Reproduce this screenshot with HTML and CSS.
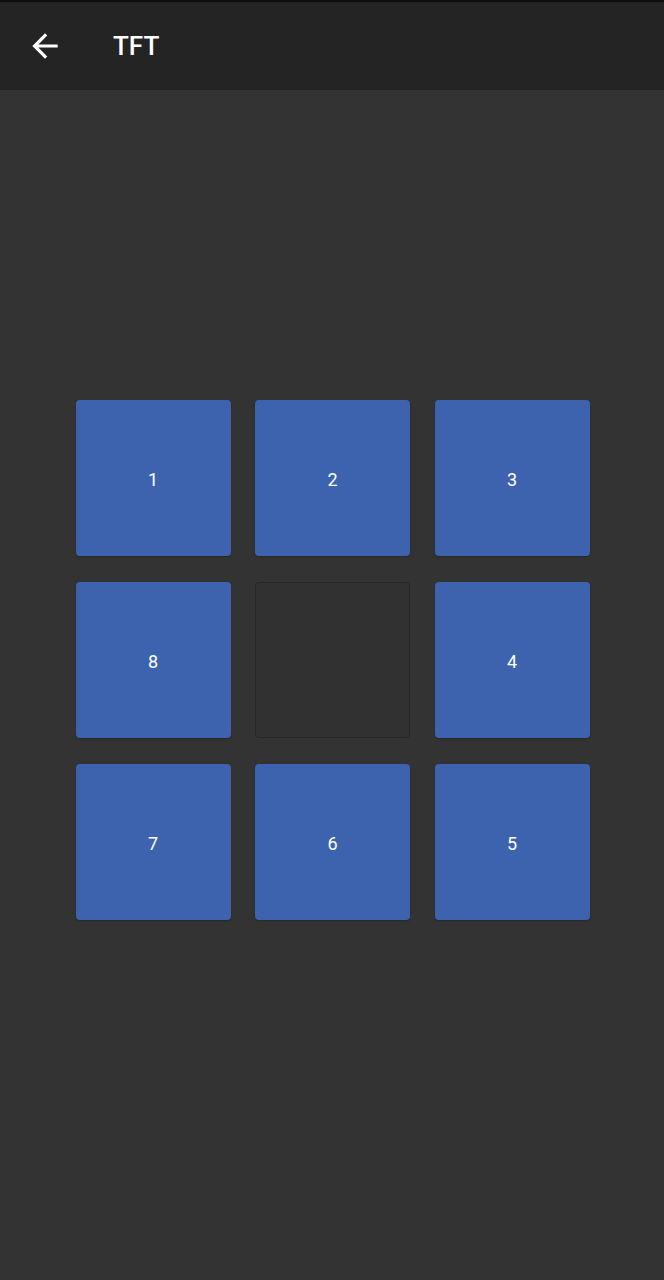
FILE: index.html
```html
<!DOCTYPE html>
<html lang="en">
<head>
  <meta charset="UTF-8">
  <title>TFT</title>
  <meta name="viewport" content="width=device-width, initial-scale=1.0">
  <link rel="stylesheet" href="styles.css">
</head>
<body>
  <header class="app-bar">
    <button class="back-btn" aria-label="Back">
      <svg width="38" height="38" viewBox="0 0 24 24"><path d="M20 11H7.83l5.59-5.59L12 4l-8 8 8 8 1.41-1.41L7.83 13H20v-2z" fill="#fff"/></svg>
    </button>
    <h1 class="title">TFT</h1>
  </header>

  <main class="board-wrap">
    <div class="board">
      <div class="tile">1</div>
      <div class="tile">2</div>
      <div class="tile">3</div>
      <div class="tile">8</div>
      <div class="tile empty"></div>
      <div class="tile">4</div>
      <div class="tile">7</div>
      <div class="tile">6</div>
      <div class="tile">5</div>
    </div>
  </main>
</body>
</html>
```

FILE: styles.css
```css
html, body {
  margin: 0;
  height: 100%;
}
body {
  font-family: Roboto, "Noto Sans", sans-serif;
  background: #333333;
  color: #fff;
}
.app-bar {
  height: 88px;
  border-top: 2px solid #0d0d0d;
  background: #242424;
  display: flex;
  align-items: center;
}
.back-btn {
  background: none;
  border: none;
  padding: 0;
  margin-left: 26px;
  width: 38px;
  height: 38px;
  cursor: pointer;
  display: flex;
}
.title {
  margin: 0 0 0 49px;
  font-size: 26px;
  font-weight: 500;
}
.board-wrap {
  padding: 310px 0 0 1px;
  display: flex;
  justify-content: center;
}
.board {
  width: 514px;
  display: grid;
  grid-template-columns: repeat(3, 1fr);
  grid-auto-rows: 156px;
  column-gap: 24.5px;
  row-gap: 26px;
}
.tile {
  background: #3d63ae;
  border-radius: 4px;
  display: flex;
  align-items: center;
  justify-content: center;
  padding-top: 2px;
  font-size: 18px;
  box-shadow: 0 1px 2px rgba(0, 0, 0, 0.25);
}
.tile.empty {
  background: #313131;
  border: 1px solid #272727;
  box-shadow: none;
}
```
